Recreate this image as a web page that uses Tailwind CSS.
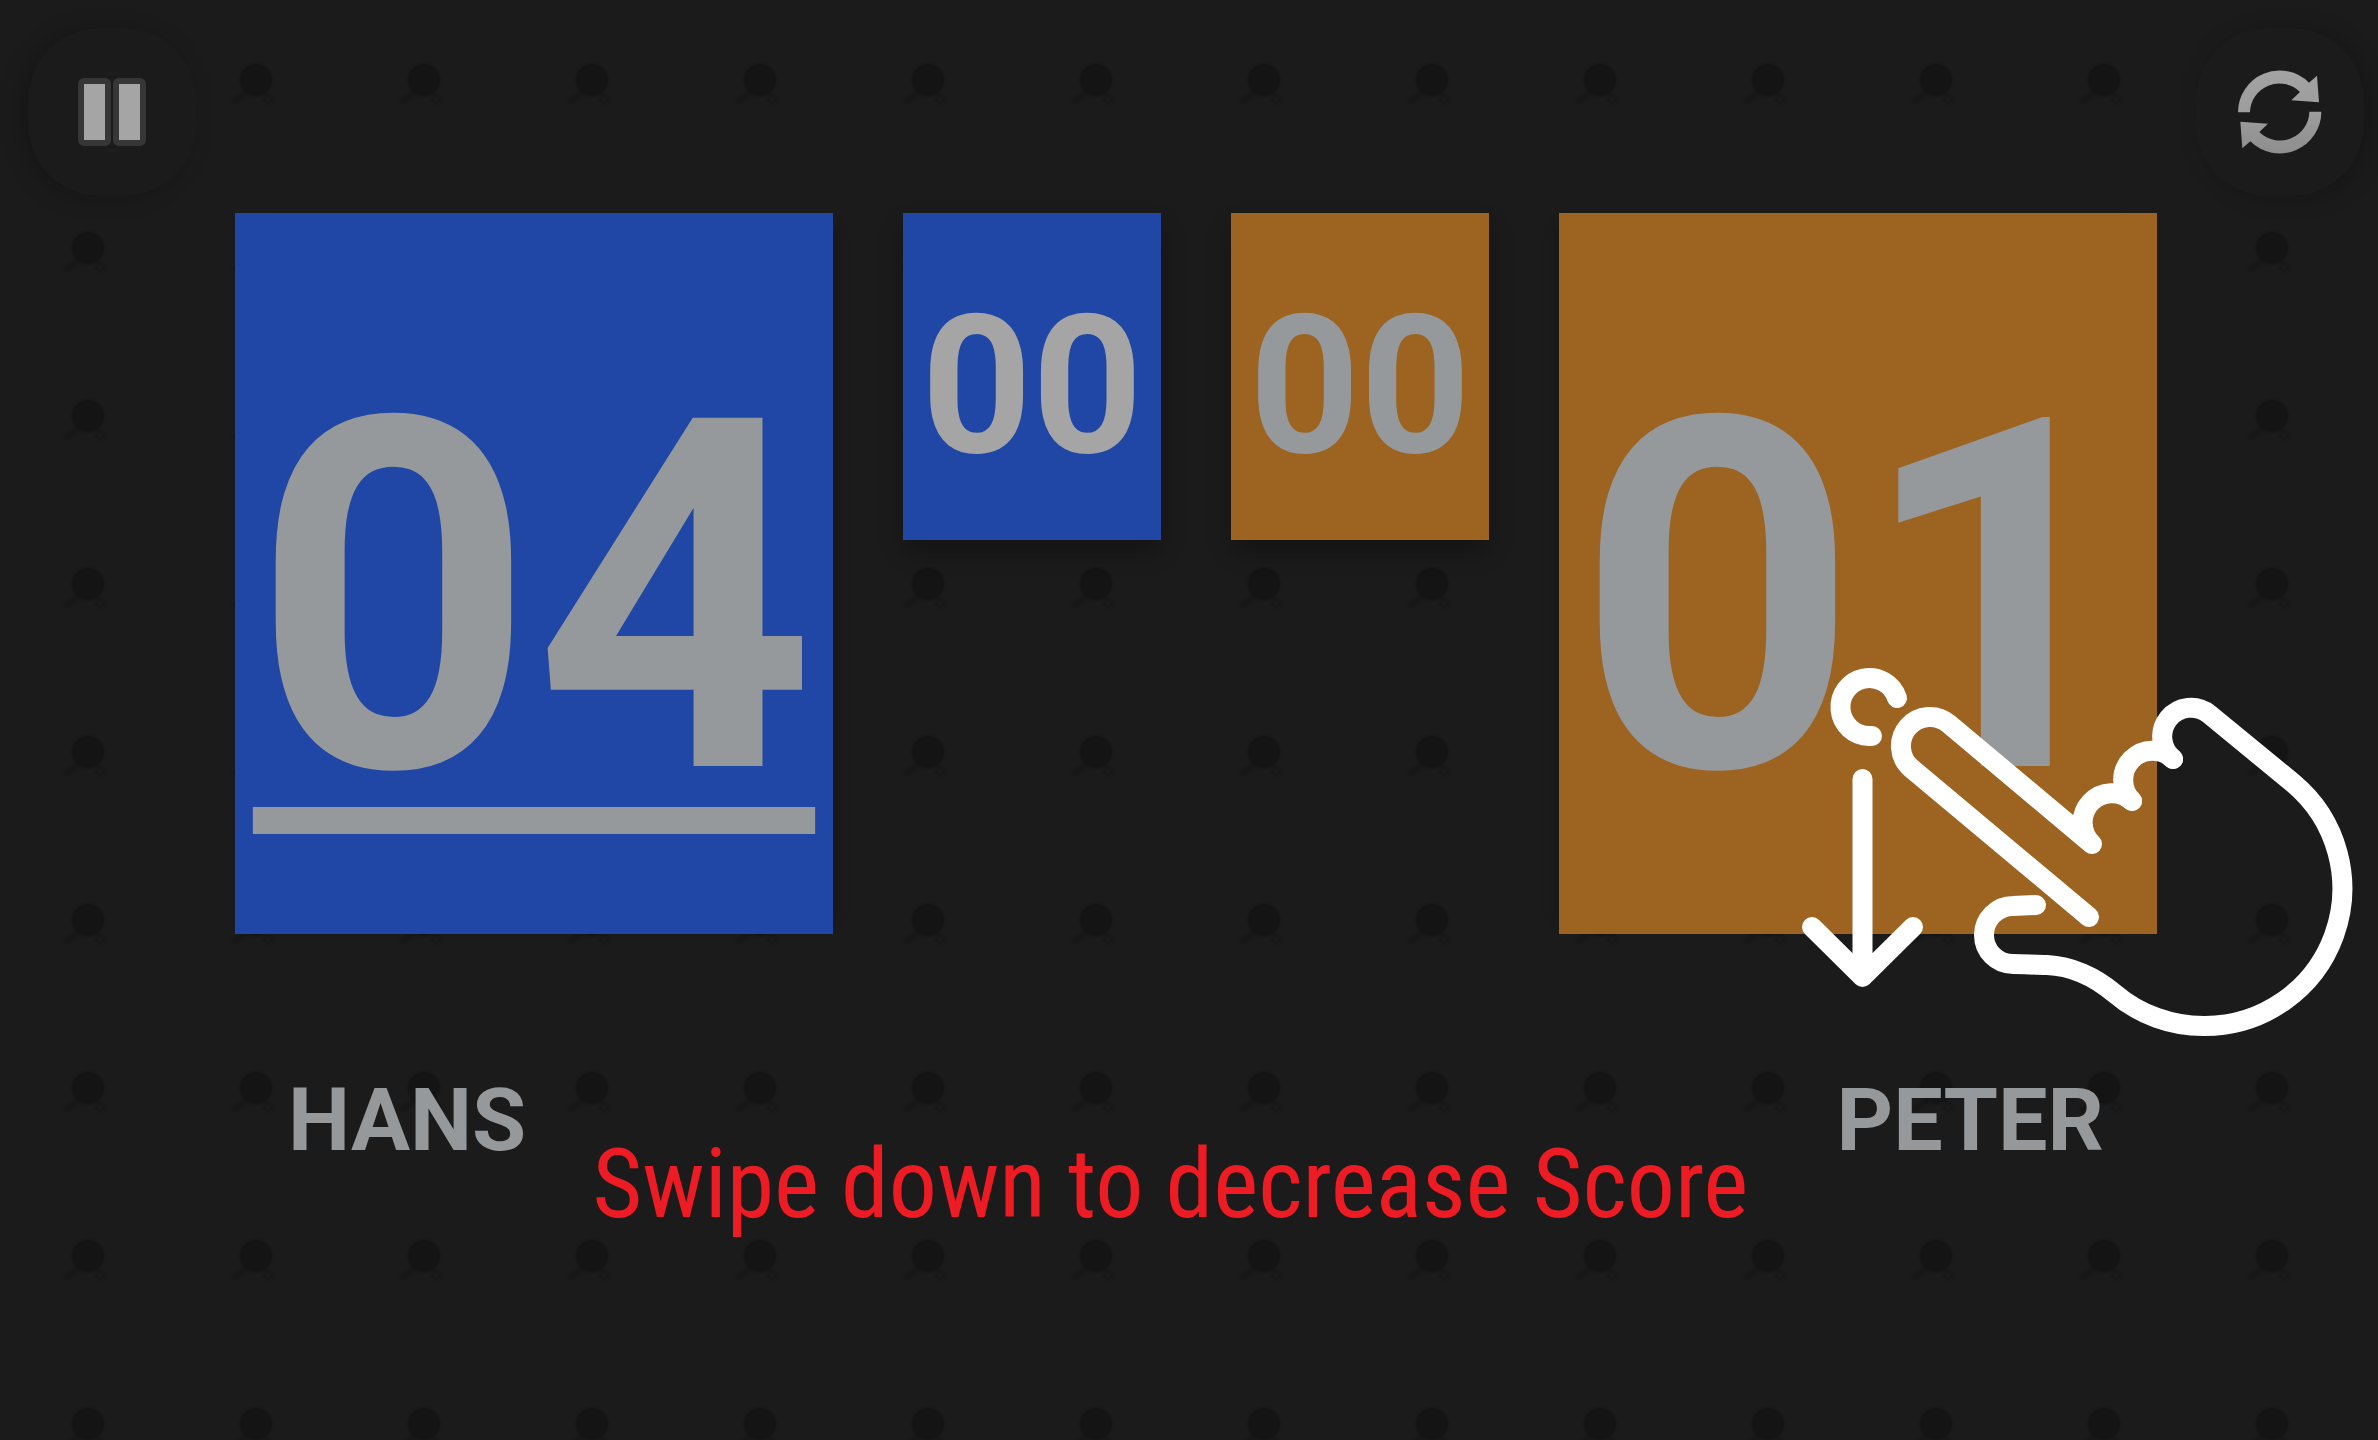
<!DOCTYPE html>
<html lang="en">
<head>
<meta charset="utf-8">
<meta name="viewport" content="width=device-width, initial-scale=1">
<title>Scoreboard</title>
<script src="https://cdn.jsdelivr.net/npm/@tailwindcss/browser@4"></script>
</head>
<body class="min-h-screen bg-[#1b1b1b] font-[Roboto,sans-serif]">
<div class="relative isolate min-h-screen overflow-hidden pl-[14px]">

  <!-- Repeating paddle-and-ball backdrop -->
  <svg class="absolute inset-0 -z-10 h-full w-full" aria-hidden="true">
    <defs>
      <filter id="soft" x="-20%" y="-20%" width="140%" height="140%" color-interpolation-filters="sRGB"><feGaussianBlur stdDeviation="1.2"/></filter>
      <pattern id="paddles" width="168" height="168" patternUnits="userSpaceOnUse">
        <g filter="url(#soft)">
          <path d="M79 92 L67 101" stroke="#171717" stroke-width="6" stroke-linecap="round"/>
          <circle cx="100" cy="99" r="4" fill="none" stroke="#161616" stroke-width="2"/>
          <circle cx="88" cy="80" r="16.5" fill="#141414"/>
        </g>
      </pattern>
    </defs>
    <rect width="100%" height="100%" fill="url(#paddles)"/>
  </svg>

  <header class="flex justify-between px-[14px] pt-7">
    <button type="button" aria-label="Pause" class="flex size-[168px] items-center justify-center gap-[2px] rounded-[72px] bg-[#1b1b1b] shadow-[-6px_2px_24px_rgba(0,0,0,0.2)]">
      <span class="h-[68px] w-[33px] rounded-[6px] border-[6px] border-[#363636] bg-[#a5a5a5]"></span>
      <span class="h-[68px] w-[33px] rounded-[6px] border-[6px] border-[#363636] bg-[#a5a5a5]"></span>
    </button>
    <button type="button" aria-label="Reset scores" class="flex size-[168px] items-center justify-center rounded-[72px] bg-[#1b1b1b] shadow-[6px_2px_24px_rgba(0,0,0,0.2)]">
      <svg class="size-[120px]" viewBox="0 6 360 360" aria-hidden="true">
        <defs>
          <linearGradient id="steel" gradientUnits="userSpaceOnUse" x1="0" y1="62" x2="0" y2="310">
            <stop offset="0" stop-color="#a3a3a3"/><stop offset="0.5" stop-color="#9d9d9d"/><stop offset="1" stop-color="#8e8e8e"/>
          </linearGradient>
        </defs>
        <path fill="url(#steel)" d="M54 187 A125 125 0 0 1 267 98 L291 77 L297 157 L214 151 L240 126 A88 88 0 0 0 90 187 Z M304 185 A125 125 0 0 1 91 274 L67 295 L61 215 L144 221 L118 246 A88 88 0 0 0 268 185 Z"/>
      </svg>
    </button>
  </header>

  <main class="pt-[17px]">
    <div class="grid grid-cols-[598fr_258fr_258fr_598fr] items-start gap-[70px] px-[221px] text-center font-bold leading-none text-[#95999b]">
      <div class="h-[721px] bg-[#2047a6] pt-[141px] text-[490px] shadow-[14px_0_14px_-14px_rgba(0,0,0,0.3)]">
        <span class="underline decoration-[27px] underline-offset-[41px] [text-decoration-skip-ink:none]">04</span>
      </div>
      <div class="h-[327px] bg-[#2047a6] pt-[77px] text-[193px] text-[#a5a5a5] shadow-[0_12px_24px_-2px_rgba(0,0,0,0.3)]">00</div>
      <div class="h-[327px] bg-[#9c6321] pt-[77px] text-[193px] shadow-[0_12px_24px_-2px_rgba(0,0,0,0.3)]">00</div>
      <div class="relative h-[721px] bg-[#9c6321] pt-[141px] text-[490px] shadow-[-14px_0_14px_-14px_rgba(0,0,0,0.3)]">
        <span>01</span>
        <!-- Swipe-down gesture hint laid over the score -->
        <svg class="absolute top-[437px] left-[231px] z-10 h-[400px] w-[570px] max-w-none" viewBox="1790 650 570 400" fill="none" stroke="#fff" stroke-width="20" stroke-linecap="round" stroke-linejoin="round" aria-hidden="true">
          <path d="M1897 698 A29 29 0 1 0 1869 736 L1872 736"/>
          <path d="M1862.5 779 V977 M1812 927 L1862.5 977 L1913 927"/>
          <path d="M2089 917 L1911 768 A28 28 0 0 1 1949 724 L2092 844 A28 28 0 0 1 2132 801"/>
          <path d="M2132 801 A28 28 0 0 1 2173 759"/>
          <path d="M2173 759 A28 28 0 0 1 2209 714 L2293 783 A137.5 137.5 0 0 1 2205 1026 A137.5 137.5 0 0 1 2114 993 C2095 977 2071 966 2047 965 C2036 965 2024 964 2013 964 A29 29 0 0 1 2013 906 L2036 905"/>
        </svg>
      </div>
    </div>

    <div class="flex items-start justify-between px-[274px] pt-[142px] leading-none">
      <h2 class="text-[88px] font-bold text-[#95999b]">HANS</h2>
      <p class="pt-[60px] pr-[22px] font-['Roboto_Condensed',Roboto,sans-serif] text-[96px] whitespace-nowrap text-[#ed1c24]">Swipe down to decrease Score</p>
      <h2 class="text-[88px] font-bold text-[#95999b]">PETER</h2>
    </div>
  </main>
</div>
</body>
</html>
